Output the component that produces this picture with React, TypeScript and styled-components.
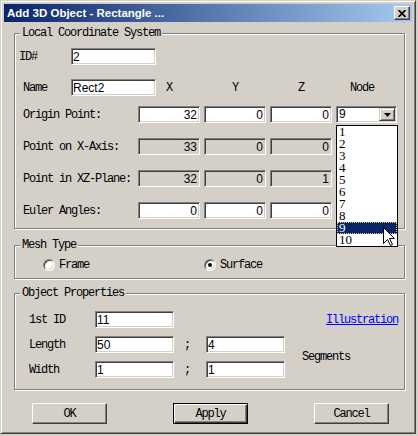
import { FC } from 'react'
import styled, { createGlobalStyle, css } from 'styled-components'

const face = '#d4d0c8'

const GlobalStyle = createGlobalStyle`
  html, body {
    margin: 0;
    padding: 0;
    background: ${face};
  }

  #root {
    width: 418px;
    height: 436px;
  }
`

const mono = css`
  font-family: 'Liberation Mono', 'Courier New', monospace;
  font-size: 12px;
  letter-spacing: -1.2px;
  color: #000;
`

const sunken = css`
  border: 1px solid;
  border-color: #808080 #fff #fff #808080;
  box-shadow: inset 1px 1px 0 #404040, inset -1px -1px 0 ${face};
`

const NODES = ['1', '2', '3', '4', '5', '6', '7', '8', '9', '10']

const App: FC = () => {
  return (
    <>
      <GlobalStyle />
      <Window>
        <TitleBar>
          <Title>Add 3D Object - Rectangle ...</Title>
          <CloseButton aria-label="Close">
            <svg width="8" height="7" viewBox="0 0 8 7">
              <path d="M0.5 0 L7.5 7 M7.5 0 L0.5 7" stroke="#000" strokeWidth="1.7" />
            </svg>
          </CloseButton>
        </TitleBar>

        <Client>
          <GroupBox $top={5} $pad="9px 7px 9px 8px">
            <Legend>Local Coordinate System</Legend>
            <CoordRow $top={0}>
              <RowLabel $shift={-4}>ID#</RowLabel>
              <Edit $w={85} readOnly value="2" />
            </CoordRow>
            <CoordRow $top={14}>
              <RowLabel>Name</RowLabel>
              <Edit $w={85} readOnly value="Rect2" />
              <Header>X</Header>
              <Header>Y</Header>
              <Header>Z</Header>
              <Header $shift={-5}>Node</Header>
            </CoordRow>
            <CoordRow $top={10}>
              <RowLabel $span={2}>Origin Point:</RowLabel>
              <Edit $w={62} $right readOnly value="32" />
              <Edit $w={62} $right readOnly value="0" />
              <Edit $w={62} $right readOnly value="0" />
              <Combo>
                <ComboValue>9</ComboValue>
                <DropButton>
                  <svg width="7" height="4" viewBox="0 0 7 4">
                    <polygon points="0,0 7,0 3.5,4" fill="#000" />
                  </svg>
                </DropButton>
                <DropList>
                  {NODES.map((n) => (
                    <DropItem key={n} $selected={n === '9'}>
                      {n}
                    </DropItem>
                  ))}
                  <Pointer width="12" height="19" viewBox="0 0 12 19">
                    <path
                      d="M0.5 0.5 V16.5 L4.5 12.5 L7.5 18.5 L9.5 17.5 L6.5 11.5 H11.5 Z"
                      fill="#fff"
                      stroke="#000"
                    />
                  </Pointer>
                </DropList>
              </Combo>
            </CoordRow>
            <CoordRow $top={15}>
              <RowLabel $span={2}>Point on X-Axis:</RowLabel>
              <Edit $w={62} $right $disabled readOnly value="33" />
              <Edit $w={62} $right $disabled readOnly value="0" />
              <Edit $w={62} $right $disabled readOnly value="0" />
            </CoordRow>
            <CoordRow $top={15}>
              <RowLabel $span={2}>Point in XZ-Plane:</RowLabel>
              <Edit $w={62} $right $disabled readOnly value="32" />
              <Edit $w={62} $right $disabled readOnly value="0" />
              <Edit $w={62} $right $disabled readOnly value="1" />
            </CoordRow>
            <CoordRow $top={15}>
              <RowLabel $span={2}>Euler Angles:</RowLabel>
              <Edit $w={62} $right readOnly value="0" />
              <Edit $w={62} $right readOnly value="0" />
              <Edit $w={62} $right readOnly value="0" />
            </CoordRow>
          </GroupBox>

          <GroupBox $top={10} $pad="7px 7px 7px 8px">
            <Legend>Mesh Type</Legend>
            <RadioRow>
              <RadioOption>
                <Radio />
                Frame
              </RadioOption>
              <RadioOption>
                <Radio $checked />
                Surface
              </RadioOption>
            </RadioRow>
          </GroupBox>

          <GroupBox $top={8} $pad="12px 6px 11px 8px">
            <Legend>Object Properties</Legend>
            <PropsGrid>
              <PropLabel>1st ID</PropLabel>
              <Edit $w={79} readOnly value="11" />
              <Link href="#">Illustration</Link>

              <PropLabel>Length</PropLabel>
              <Edit $w={79} readOnly value="50" />
              <Separator>;</Separator>
              <Edit $w={79} readOnly value="4" />
              <Segments>Segments</Segments>

              <PropLabel>Width</PropLabel>
              <Edit $w={79} readOnly value="1" />
              <Separator>;</Separator>
              <Edit $w={79} readOnly value="1" />
            </PropsGrid>
          </GroupBox>

          <ButtonRow>
            <PushButton>OK</PushButton>
            <PushButton $default>Apply</PushButton>
            <PushButton>Cancel</PushButton>
          </ButtonRow>
        </Client>
      </Window>
    </>
  )
}

export default App

const Window = styled.div`
  width: 416px;
  height: 434px;
  box-sizing: border-box;
  padding: 3px;

  display: flex;
  flex-direction: column;

  background: ${face};
  border: 1px solid;
  border-color: ${face} #404040 #404040 ${face};
  box-shadow: inset 1px 1px 0 #fff, inset -1px -1px 0 #808080;
`

const TitleBar = styled.div`
  height: 18px;
  padding: 0 2px 0 3px;

  display: flex;
  align-items: center;
  justify-content: space-between;

  background: linear-gradient(to right, #0a246a, #a6caf0);
`

const Title = styled.span`
  font-family: 'Liberation Sans', Arial, sans-serif;
  font-weight: 700;
  font-size: 11.5px;
  color: #fff;
  white-space: nowrap;
`

const CloseButton = styled.span`
  width: 16px;
  height: 14px;
  box-sizing: border-box;

  display: flex;
  align-items: center;
  justify-content: center;

  background: ${face};
  border: 1px solid;
  border-color: #fff #404040 #404040 #fff;
  box-shadow: inset -1px -1px 0 #808080;
`

const Client = styled.div`
  padding-left: 10px;
  display: flex;
  flex-direction: column;
`

const GroupBox = styled.fieldset<{ $top: number; $pad: string }>`
  margin: ${({ $top }) => $top}px 0 0;
  width: 391px;
  min-width: 0;
  box-sizing: border-box;
  padding: ${({ $pad }) => $pad};

  border: 1px solid #808080;
  box-shadow: inset 1px 1px 0 #fff, 1px 1px 0 #fff;
`

const Legend = styled.legend`
  ${mono}
  line-height: 12px;
  padding: 0 2px;
  margin-left: -3px;
  background: ${face};
`

const CoordRow = styled.div<{ $top: number }>`
  margin-top: ${({ $top }) => $top}px;
  height: 17px;

  display: grid;
  grid-template-columns: 48px 67px 66px 66px 66px 61px;
  align-items: center;
`

const RowLabel = styled.span<{ $span?: number; $shift?: number }>`
  ${mono}
  grid-column: span ${({ $span }) => $span ?? 1};
  margin-left: ${({ $shift }) => $shift ?? 0}px;
  white-space: nowrap;
`

const Header = styled.span<{ $shift?: number }>`
  ${mono}
  width: 62px;
  text-align: center;
  margin-left: ${({ $shift }) => $shift ?? 0}px;
`

const Edit = styled.input<{ $w: number; $right?: boolean; $disabled?: boolean }>`
  width: ${({ $w }) => $w}px;
  height: 17px;
  box-sizing: border-box;
  margin: 0;
  padding: 0 2px 0 1px;
  outline: none;

  ${sunken}
  background: ${({ $disabled }) => ($disabled ? face : '#fff')};

  font-family: 'Liberation Sans', Arial, sans-serif;
  font-size: 12px;
  color: #000;
  text-align: ${({ $right }) => ($right ? 'right' : 'left')};
`

const Combo = styled.div`
  position: relative;
  width: 61px;
  height: 17px;
  box-sizing: border-box;

  display: flex;
  align-items: stretch;

  ${sunken}
  background: #fff;
`

const ComboValue = styled.span`
  flex: 1;
  padding-left: 2px;
  font-family: 'Liberation Sans', Arial, sans-serif;
  font-size: 12px;
  line-height: 15px;
`

const DropButton = styled.span`
  width: 16px;
  margin: 1px 1px 1px 0;
  box-sizing: border-box;

  display: flex;
  align-items: center;
  justify-content: center;

  background: ${face};
  border: 1px solid;
  border-color: ${face} #404040 #404040 ${face};
  box-shadow: inset 1px 1px 0 #fff, inset -1px -1px 0 #808080;
`

const DropList = styled.div`
  position: absolute;
  top: 18px;
  left: -1px;
  z-index: 2;
  width: 62px;
  box-sizing: border-box;

  display: flex;
  flex-direction: column;

  background: #fff;
  border: 1px solid #000;
`

const DropItem = styled.div<{ $selected?: boolean }>`
  height: 12px;
  padding-left: 2px;

  font-family: 'Liberation Serif', 'Times New Roman', serif;
  font-size: 13px;
  line-height: 12px;
  color: ${({ $selected }) => ($selected ? '#fff' : '#000')};
  background: ${({ $selected }) => ($selected ? '#0a246a' : 'transparent')};
  outline: ${({ $selected }) => ($selected ? '1px dotted #e8d070' : 'none')};
  outline-offset: -1px;
`

const Pointer = styled.svg`
  position: absolute;
  left: 46px;
  top: 101px;
`

const RadioRow = styled.div`
  height: 13px;
  padding-left: 20px;

  display: grid;
  grid-template-columns: 161px auto;
  align-items: center;
`

const RadioOption = styled.label`
  ${mono}
  display: flex;
  align-items: center;
  gap: 4px;
`

const Radio = styled.span<{ $checked?: boolean }>`
  width: 12px;
  height: 12px;
  box-sizing: border-box;
  border-radius: 50%;

  display: flex;
  align-items: center;
  justify-content: center;

  background: #fff;
  border: 1px solid;
  border-color: #808080 #fff #fff #808080;
  box-shadow: inset 1px 1px 0 #404040, inset -1px -1px 0 ${face};

  &::after {
    content: '';
    display: ${({ $checked }) => ($checked ? 'block' : 'none')};
    width: 4px;
    height: 4px;
    border-radius: 50%;
    background: #000;
  }
`

const PropsGrid = styled.div`
  margin-left: 6px;

  display: grid;
  grid-template-columns: 66px 79px 32px 79px 1fr;
  grid-template-rows: 17px 17px 17px;
  row-gap: 8px;
  align-items: center;
`

const PropLabel = styled.span`
  ${mono}
  grid-column: 1;
`

const Separator = styled.span`
  ${mono}
  padding-left: 10px;
`

const Link = styled.a`
  ${mono}
  grid-column: 4 / 6;
  justify-self: end;
  color: #0000ff;
  text-decoration: underline;
`

const Segments = styled.span`
  ${mono}
  grid-column: 5;
  grid-row: 2 / 4;
  align-self: center;
  padding-left: 17px;
`

const ButtonRow = styled.div`
  margin-top: 13px;
  width: 391px;
  box-sizing: border-box;
  padding: 0 16px 0 18px;

  display: flex;
  justify-content: space-between;
`

const PushButton = styled.button<{ $default?: boolean }>`
  ${mono}
  width: 75px;
  height: 21px;
  box-sizing: border-box;
  padding: 0;

  background: ${face};
  border: 1px solid;
  border-color: ${({ $default }) => ($default ? '#000' : '#fff #404040 #404040 #fff')};
  box-shadow: ${({ $default }) =>
    $default
      ? 'inset 1px 1px 0 #fff, inset -1px -1px 0 #404040, inset -2px -2px 0 #808080'
      : 'inset -1px -1px 0 #808080'};
`
